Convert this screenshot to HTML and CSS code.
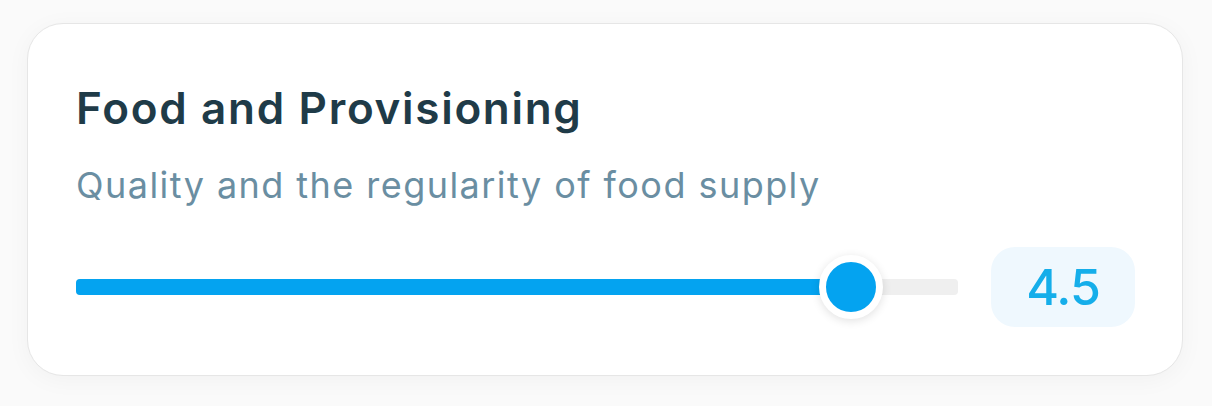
FILE: index.html
```html
<!DOCTYPE html>
<html>
<head>
<meta charset="utf-8">
<link rel="stylesheet" href="styles.css">
</head>
<body>
<div class="card">
  <h2 class="title">Food and Provisioning</h2>
  <p class="subtitle">Quality and the regularity of food supply</p>
  <div class="row">
    <div class="slider">
      <div class="track">
        <div class="fill" style="width: 87.9%"></div>
        <div class="thumb" style="left: 87.9%"></div>
      </div>
    </div>
    <div class="value">4.5</div>
  </div>
</div>
</body>
</html>
```
FILE: styles.css
```css
html, body {
  margin: 0;
  padding: 0;
}
body {
  background: #fafafa;
  font-family: Inter, "Noto Sans", sans-serif;
  padding: 23px 29px 30px 27px;
}
.card {
  box-sizing: border-box;
  width: 1156px;
  height: 353px;
  background: #ffffff;
  border: 1px solid #e6e6e6;
  border-radius: 36px;
  box-shadow: 0 4px 24px rgba(0, 0, 0, 0.04);
  padding: 0 47px 0 48px;
  display: flex;
  flex-direction: column;
}
.title {
  margin: 57px 0 0;
  font-size: 44px;
  line-height: 54px;
  font-weight: 600;
  color: #1f3b48;
  letter-spacing: 1.7px;
}
.subtitle {
  margin: 28px 0 0;
  font-size: 36px;
  line-height: 44px;
  font-weight: 400;
  color: #6a8ea2;
  letter-spacing: 1.45px;
}
.row {
  margin-top: 40px;
  display: flex;
  align-items: center;
  gap: 33px;
}
.slider {
  flex: 1;
}
.track {
  position: relative;
  height: 16px;
  border-radius: 4px;
  background: #efefef;
}
.fill {
  height: 100%;
  border-radius: 4px;
  background: #04a3f0;
}
.thumb {
  position: absolute;
  top: 50%;
  width: 50px;
  height: 50px;
  margin: -32px 0 0 -32px;
  border: 7px solid #ffffff;
  border-radius: 50%;
  background: #04a3f0;
  box-shadow: 0 2px 10px rgba(0, 0, 0, 0.12);
}
.value {
  width: 144px;
  height: 80px;
  border-radius: 24px;
  background: #eff8fe;
  color: #15aeea;
  font-size: 50px;
  font-weight: 500;
  display: flex;
  align-items: center;
  justify-content: center;
  letter-spacing: -1px;
}
```
